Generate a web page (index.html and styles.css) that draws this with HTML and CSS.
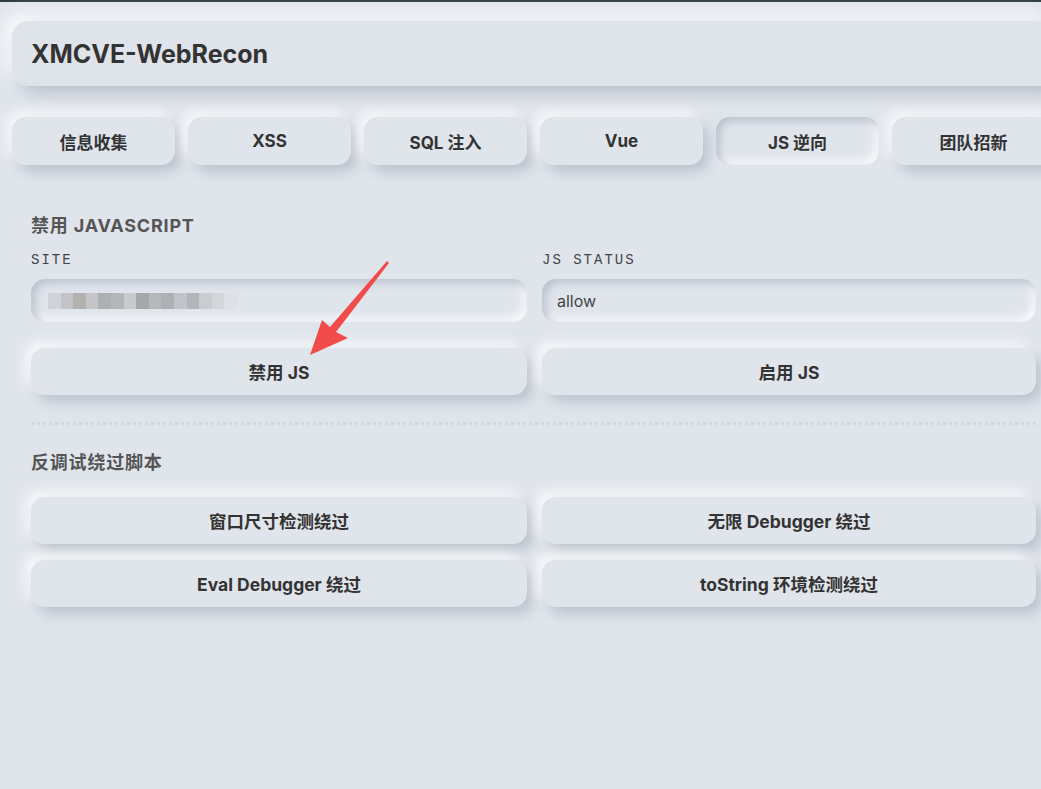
FILE: index.html
```html
<!DOCTYPE html>
<html lang="zh-CN">
<head>
    <meta charset="UTF-8">
    <meta name="viewport" content="width=device-width, initial-scale=1.0">
    <title>XMCVE-WebRecon</title>
    <link rel="stylesheet" href="styles.css">
</head>
<body>
    <div class="topbar"></div>
    <div class="app">
        <header class="header">
            <h1>XMCVE-WebRecon</h1>
        </header>

        <nav class="tabs">
            <button class="tab">信息收集</button>
            <button class="tab">XSS</button>
            <button class="tab">SQL 注入</button>
            <button class="tab">Vue</button>
            <button class="tab active">JS 逆向</button>
            <button class="tab">团队招新</button>
        </nav>

        <section class="panel">
            <h2>禁用 JAVASCRIPT</h2>
            <div class="grid">
                <div class="field">
                    <label>SITE</label>
                    <div class="input blurred">
                        <span class="px" style="background:#cfd3d9"></span>
                        <span class="px" style="background:#c2c4c8"></span>
                        <span class="px" style="background:#b3b2b1"></span>
                        <span class="px" style="background:#c4c6ca"></span>
                        <span class="px" style="background:#aeafb2"></span>
                        <span class="px" style="background:#b4b6ba"></span>
                        <span class="px" style="background:#c8cacd"></span>
                        <span class="px" style="background:#a6a7aa"></span>
                        <span class="px" style="background:#b6b8bb"></span>
                        <span class="px" style="background:#adb1b6"></span>
                        <span class="px" style="background:#c0c4c8"></span>
                        <span class="px" style="background:#b2b6ba"></span>
                        <span class="px" style="background:#c9cdd0"></span>
                        <span class="px" style="background:#d3d6da"></span>
                        <span class="px" style="background:#dde0e4"></span>
                    </div>
                </div>
                <div class="field">
                    <label>JS STATUS</label>
                    <div class="input">allow</div>
                </div>
                <button class="btn">禁用 JS</button>
                <button class="btn">启用 JS</button>
            </div>

            <div class="divider"></div>

            <h2>反调试绕过脚本</h2>
            <div class="grid">
                <button class="btn">窗口尺寸检测绕过</button>
                <button class="btn">无限 Debugger 绕过</button>
                <button class="btn">Eval Debugger 绕过</button>
                <button class="btn">toString 环境检测绕过</button>
            </div>
        </section>
    </div>

    <svg class="arrow" width="100" height="110" viewBox="0 0 100 110">
        <polygon points="87,3 89,5 36,74 48,80 10,97 22,62 30,69" fill="#f24b4b"/>
    </svg>
</body>
</html>
```

FILE: styles.css
```css
* {
    box-sizing: border-box;
}
body {
    margin: 0;
    background: #e0e5ec;
    font-family: Inter, "Noto Sans CJK SC", sans-serif;
    color: #333;
    overflow: hidden;
    height: 789px;
}
.topbar {
    height: 2px;
    background: #2e3b3b;
}
.app {
    width: 1043px;
    margin-left: 12px;
    padding-top: 19px;
}
.header {
    height: 65px;
    border-radius: 16px;
    background: #dfe3ea;
    box-shadow: 8px 8px 16px #bcc2cd, -8px -8px 16px #f7f9fb;
    display: flex;
    align-items: center;
    padding-left: 19px;
}
.header h1 {
    margin: 0;
    font-size: 25px;
    font-weight: 700;
    color: #333;
}
.tabs {
    display: flex;
    gap: 13px;
    margin-top: 31px;
}
.tab {
    width: 163px;
    height: 48px;
    border: none;
    border-radius: 14px;
    background: #e0e5ec;
    font-family: Inter, "Noto Sans CJK SC", sans-serif;
    font-size: 17px;
    font-weight: 700;
    color: #333;
    box-shadow: 6px 7px 13px #bcc2cd, -6px -6px 12px #f8f9fb;
}
.tab.active {
    box-shadow: inset 4px 4px 8px #bcc2cd, inset -4px -4px 8px #fbfcfd;
}
.panel {
    padding: 46px 19px 0 19px;
}
.panel h2 {
    margin: 0;
    font-size: 18px;
    font-weight: 700;
    color: #555;
    letter-spacing: 0.8px;
}
.grid {
    display: grid;
    grid-template-columns: 496px 494px;
    column-gap: 15px;
    row-gap: 26px;
    margin-top: 24px;
}
.grid + .divider {
    margin-top: 27px;
}
.field label {
    display: block;
    font-family: "Liberation Mono", monospace;
    font-size: 14px;
    letter-spacing: 2px;
    color: #444;
    margin-top: -9px;
    margin-bottom: 11px;
}
.input {
    height: 43px;
    border-radius: 14px;
    background: #e0e5ec;
    box-shadow: inset 4px 4px 8px #bcc2cd, inset -4px -4px 8px #fbfcfd;
    padding-left: 15px;
    display: flex;
    align-items: center;
    font-size: 16px;
    color: #444;
}
.blurred {
    padding-left: 17px;
}
.px {
    width: 12.6px;
    height: 16px;
}
.btn {
    height: 47px;
    border: none;
    border-radius: 14px;
    background: #e0e5ec;
    font-family: Inter, "Noto Sans CJK SC", sans-serif;
    font-size: 17.5px;
    font-weight: 700;
    color: #333;
    box-shadow: 6px 7px 13px #bcc2cd, -6px -6px 12px #f8f9fb;
}
.divider {
    height: 3px;
    border-top: 3px dotted #d3d8e0;
    margin-bottom: 23px;
}
.panel .grid:last-child {
    margin-top: 23px;
    row-gap: 16px;
}
.arrow {
    position: absolute;
    left: 300px;
    top: 258px;
}
```
